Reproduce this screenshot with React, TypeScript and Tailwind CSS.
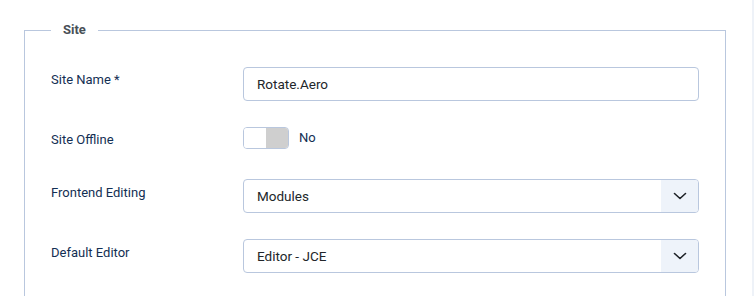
import React from 'react';

const Chevron: React.FC = () => (
  <svg width="14" height="8" viewBox="0 0 14 8" fill="none" className="block">
    <path d="M1.5 1.5 L7 6.5 L12.5 1.5" stroke="#1f2328" strokeWidth="1.6" strokeLinecap="round" strokeLinejoin="round" />
  </svg>
);

const Select: React.FC<{ value: string }> = ({ value }) => (
  <div className="flex h-[34px] w-[456px] overflow-hidden rounded-[4px] border border-[#b9c7de] bg-white">
    <div className="flex flex-1 items-center pl-[13px] text-[13.5px] text-[#22262a]">{value}</div>
    <div className="flex w-[37px] items-center justify-center bg-[#eef3fa]">
      <Chevron />
    </div>
  </div>
);

const App: React.FC = () => {
  return (
    <div className="flex h-[296px] w-[754px] overflow-hidden bg-white font-['Roboto',sans-serif]">
      <div className="flex-1">
        {/* Site fieldset */}
        <fieldset className="ml-[24px] mt-[22px] h-[320px] w-[702px] border border-[#b9c7de] pl-[26px] pr-[26px]">
          <legend className="px-3 text-[13px] font-bold leading-[16px] text-[#495057]">Site</legend>

          <div className="mt-[29px] flex h-[34px] items-start">
            <label className="w-[192px] pt-[5px] text-[13px] leading-[16px] text-[#132f53]">Site Name *</label>
            <div className="flex h-[34px] w-[456px] items-center rounded-[4px] border border-[#b9c7de] pl-[13px] text-[13.5px] text-[#22262a]">
              Rotate.Aero
            </div>
          </div>

          <div className="mt-[26px] flex h-[22px] items-start">
            <label className="w-[192px] pt-[5px] text-[13px] leading-[16px] text-[#132f53]">Site Offline</label>
            <div className="flex items-center">
              <div className="flex h-[22px] w-[46px] overflow-hidden rounded-[4px] border border-[#b9c7de]">
                <div className="flex-1 bg-white" />
                <div className="flex-1 bg-[#cfcfcf]" />
              </div>
              <span className="ml-[10px] text-[13px] text-[#132f53]">No</span>
            </div>
          </div>

          <div className="mt-[30px] flex items-start">
            <label className="w-[192px] pt-[6px] text-[13px] leading-[16px] text-[#132f53]">Frontend Editing</label>
            <Select value="Modules" />
          </div>

          <div className="mt-[26px] flex items-start">
            <label className="w-[192px] pt-[6px] text-[13px] leading-[16px] text-[#132f53]">Default Editor</label>
            <Select value="Editor - JCE" />
          </div>
        </fieldset>
      </div>
      <div className="w-[2px] bg-[#eef2f8]" />
    </div>
  );
};

export default App;
